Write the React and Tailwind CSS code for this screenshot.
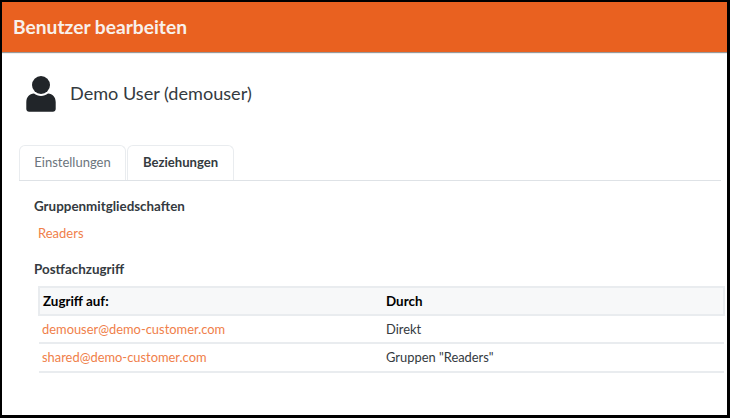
import React from "react";

const sans = "font-['Lato','Noto_Sans',sans-serif]";

const rows = [
  { mail: "demouser@demo-customer.com", via: "Direkt", height: "h-[28px]" },
  { mail: "shared@demo-customer.com", via: 'Gruppen "Readers"', height: "h-[29px]" },
];

const UserIcon = () => (
  <svg width="30" height="36" viewBox="0 0 30 36" className="block" aria-hidden="true">
    <circle cx="15" cy="9" r="9" fill="#212529" />
    <path
      d="M8 17.600C10 19.200 12.300 20 15 20s5-.8 7-2.400c4.600.4 7.600 3.600 7.700 8.400v7c0 1.600-1.200 2.800-2.800 2.800H3.100C1.500 35.800.3 34.600.3 33v-7c.1-4.800 3.100-8 7.700-8.400z"
      fill="#212529"
    />
  </svg>
);

export default function App() {
  return (
    <div className={`h-[418px] w-[730px] overflow-hidden border-t-2 border-r-[3px] border-b-[3px] border-l-2 border-black bg-white text-[#212529] ${sans}`}>
      <header className="flex h-[50px] items-center bg-[#e96120] pl-[11px] shadow-[0_1px_1px_rgba(0,0,0,0.4)]">
        <h1 className="text-[19.200px] font-bold text-[#f8f1ec]">Benutzer bearbeiten</h1>
      </header>

      <div className="mt-6 flex h-[36px] items-center pl-6">
        <UserIcon />
        <span className="mb-px ml-[14px] text-[18.100px] text-[#343a40]">Demo User (demouser)</span>
      </div>

      <div className="mt-[33px] mr-[6px] ml-[17px] flex h-[36px] items-stretch gap-px border-b border-[#dee2e6]">
        <div className="flex w-[107px] items-center justify-center rounded-t-md border border-b-0 border-[#e9ecef] text-[13px] text-[#6c757d]">
          Einstellungen
        </div>
        <div className="flex w-[107px] items-center justify-center rounded-t-md border border-b-0 border-[#e9ecef] text-[13.100px] font-bold text-[#343a40]">
          Beziehungen
        </div>
      </div>

      <section className="pt-[16px] pl-[32px]">
        <h2 className="text-[13.400px] leading-[18px] font-bold text-[#343a40]">Gruppenmitgliedschaften</h2>
        <a className="mt-[9px] ml-1 block text-[13px] leading-[18px] text-[#f0804a]">Readers</a>
        <h2 className="mt-[18px] text-[13.400px] leading-[18px] font-bold text-[#343a40]">Postfachzugriff</h2>
      </section>

      <table className="mt-[8px] ml-[36px] w-[687px] table-fixed border-collapse text-[12.900px]">
        <thead>
          <tr className="h-[28px] border-2 border-[#e9ecef] bg-[#f7f8f9] text-[13.400px] text-black">
            <th className="w-[347px] pl-[3px] text-left font-bold">Zugriff auf:</th>
            <th className="pl-0 text-left font-bold">Durch</th>
          </tr>
        </thead>
        <tbody>
          {rows.map((row) => (
            <tr key={row.mail} className={`${row.height} border-b-2 border-[#e9ecef]`}>
              <td className="pt-px pl-[3px] text-[#f0804a]">{row.mail}</td>
              <td className="pt-px text-[#343a40]">{row.via}</td>
            </tr>
          ))}
        </tbody>
      </table>
    </div>
  );
}
